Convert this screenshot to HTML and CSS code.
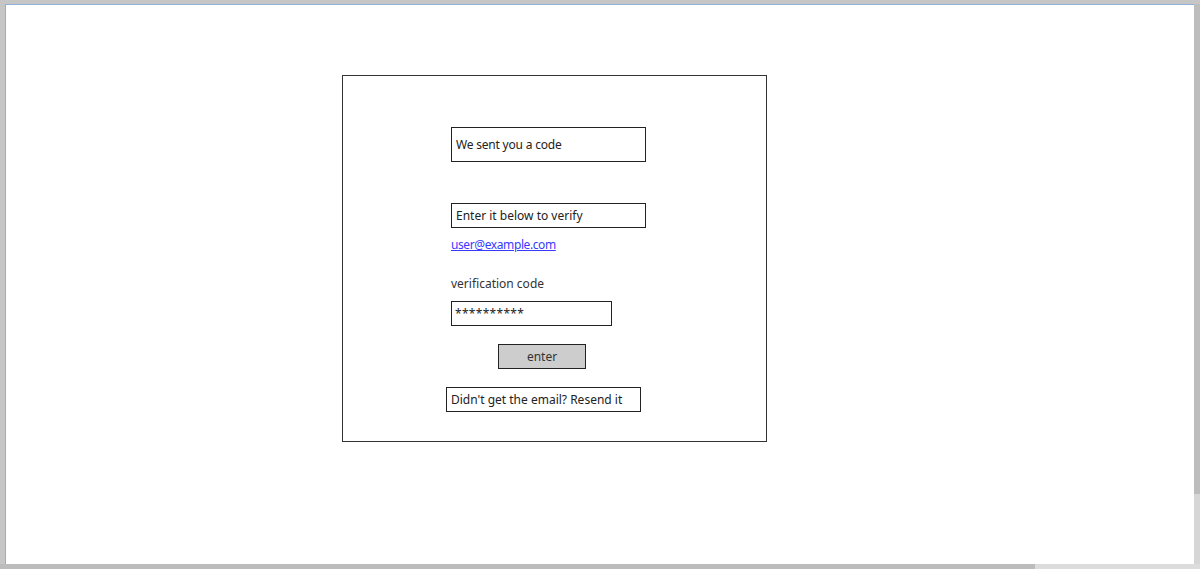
FILE: index.html
```html
<!DOCTYPE html>
<html lang="en">
<head>
  <meta charset="UTF-8" />
  <title>Verify your email</title>
  <link rel="stylesheet" href="styles.css">
</head>
<body>
  <div class="window">
    <div class="canvas">
      <div class="card">
        <div class="box title">We sent you a code</div>
        <div class="box hint">Enter it below to verify</div>
        <a class="email" href="#">user@example.com</a>
        <div class="label">verification code</div>
        <div class="box code">**********</div>
        <div class="btn">enter</div>
        <div class="box resend">Didn't get the email? Resend it</div>
      </div>
    </div>
    <div class="vscroll"><div class="thumb"></div></div>
    <div class="hscroll"><div class="thumb"></div></div>
    <div class="corner"></div>
  </div>
</body>
</html>
```

FILE: styles.css
```css
body { margin: 0; background: #c6c6c6; height: 569px; overflow: hidden; font-family: "Noto Sans", sans-serif; font-size: 12px; color: #222; }
.window { display: grid; grid-template-columns: 1189px 6px; grid-template-rows: 560px 5px; margin: 4px 0 0 5px; }
.canvas { background: #fff; border-top: 1px solid #8db1d8; border-left: 1px solid #8db1d8; }
.vscroll { background: #d6d6d6; }
.vscroll .thumb { height: 490px; background: #bdbdbd; }
.hscroll { background: #dcdcdc; margin-left: -5px; }
.hscroll .thumb { width: 1035px; height: 100%; background: #bcbcbc; }
.corner { background: #dcdcdc; }

.card { box-sizing: border-box; width: 425px; height: 367px; margin: 70px 0 0 336px; padding: 51px 0 0 108px; border: 1px solid #333; display: flex; flex-direction: column; align-items: flex-start; }
.box { box-sizing: border-box; border: 1px solid #222; background: #fff; padding: 0 4px; display: flex; align-items: center; width: 195px; height: 25px; }
.title { height: 35px; letter-spacing: -0.2px; }
.hint { margin-top: 41px; }
.email { margin-top: 9px; line-height: 16px; letter-spacing: -0.4px; color: #3a3aff; }
.label { margin-top: 23px; line-height: 16px; color: #333; }
.code { margin-top: 9px; width: 161px; padding: 0 3px; letter-spacing: 0.3px; }
.btn { box-sizing: border-box; margin: 18px 0 0 47px; width: 88px; height: 25px; border: 1px solid #222; background: #cdcdcd; display: flex; align-items: center; justify-content: center; color: #333; }
.resend { margin: 18px 0 0 -5px; }
```
